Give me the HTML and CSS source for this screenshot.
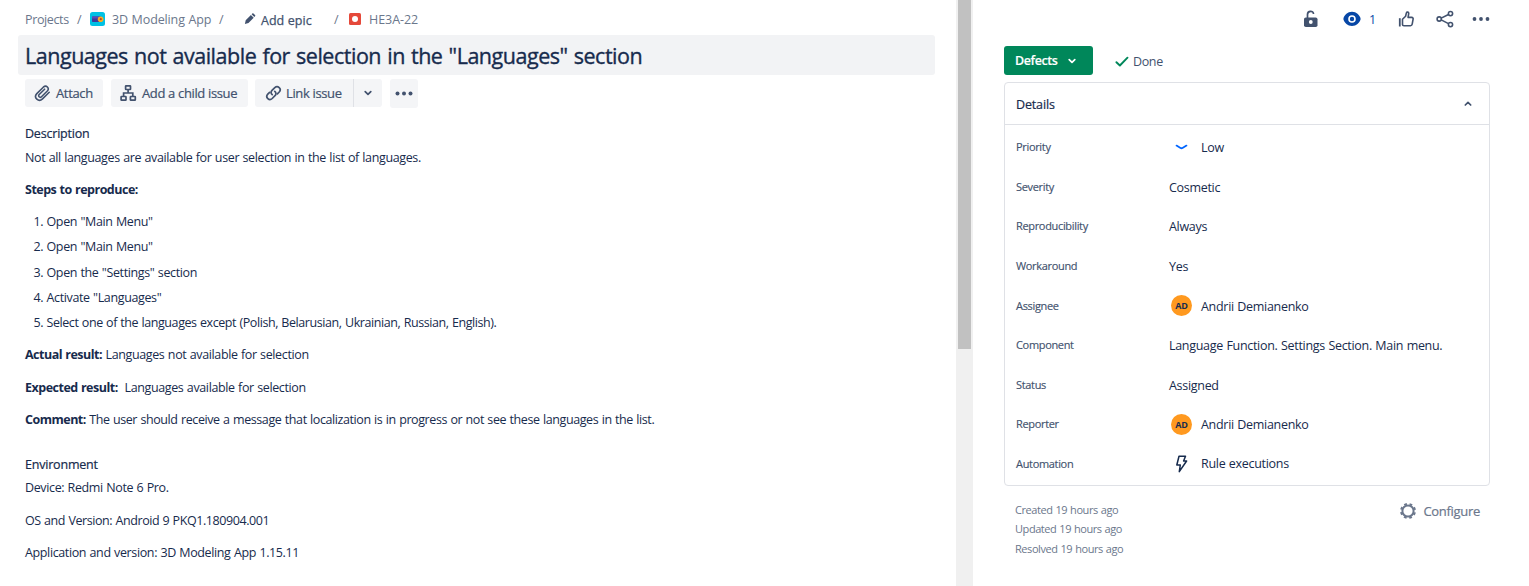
FILE: index.html
```html
<!DOCTYPE html>
<html lang="en">
<head>
<meta charset="utf-8">
<title>HE3A-22</title>
<link rel="stylesheet" href="styles.css">
</head>
<body>
<div class="page">
  <main class="issue">
    <nav class="crumbs">
      <span class="crumb projects">Projects</span><span class="slash">/</span>
      <svg class="app-icon" width="15" height="14" viewBox="0 0 15 14"><rect width="15" height="14" rx="2.5" fill="#00c1e4"/><rect x="2" y="4.5" width="9" height="5.5" rx=".8" fill="#3d3a9c"/><rect x="2" y="4.5" width="9" height="2" fill="#5b4bb5"/><circle cx="10.6" cy="7.2" r="2.8" fill="#ffab1f"/><circle cx="10.8" cy="7.2" r="1.1" fill="#b04a2e"/></svg>
      <span class="crumb app">3D Modeling App</span><span class="slash">/</span>
      <svg class="pencil" width="12" height="12" viewBox="0 0 12 12" fill="#42526e"><path d="M1.7 7.2 6.9 2l2.8 2.8-5.2 5.2L.9 11.1zM7.6 1.3l.7-.7q.6-.5 1.2 0l1.500 1.500q.6.6 0 1.200l-.7.8z"/></svg>
      <span class="epic">Add epic</span><span class="slash">/</span>
      <svg class="bug" width="12" height="12" viewBox="0 0 12 12"><rect width="12" height="12" rx="1.500" fill="#e5493a"/><circle cx="6" cy="6" r="3" fill="#fff"/></svg>
      <span class="crumb key">HE3A-22</span>
    </nav>
    <h1 class="title">Languages not available for selection in the "Languages" section</h1>
    <div class="actions">
      <button class="btn attach"><svg width="17" height="18" viewBox="0 0 17 18" fill="none" stroke="#42526e" stroke-width="1.600" stroke-linecap="round" stroke-linejoin="round"><path d="M15.200 8.300 8.500 14.900c-3.900 3.700-9.300-1.400-5.700-5.300L9.300 3.200c3-2.800 6.600 1 4 3.800L7.500 12.700c-1.700 1.600-3.900-.6-2.300-2.200L10.600 5.200"/></svg><span>Attach</span></button>
      <button class="btn child"><svg width="17" height="18" viewBox="0 0 17 18" fill="none" stroke="#42526e" stroke-width="1.700"><rect x="5.600" y="1.800" width="4.900" height="3.700" rx=".5"/><rect x="1.100" y="12.500" width="4.900" height="3.700" rx=".5"/><rect x="10.400" y="12.500" width="4.900" height="3.700" rx=".5"/><path d="M8.100 5.500V9M3.600 12.500V9h9.200v3.500"/></svg><span>Add a child issue</span></button>
      <div class="split">
        <button class="btn link"><svg width="17" height="18" viewBox="0 0 17 18" fill="none" stroke="#42526e" stroke-width="1.700" stroke-linecap="round"><path d="M7.200 10.700C5.600 9.300 5.800 7.600 7 6.400l2.800-2.800c2.900-2.700 7.300 1.200 4.400 4.400l-1.800 1.800"/><path d="M9.800 7.400c1.600 1.400 1.400 3.100.2 4.300l-2.800 2.800c-2.900 2.700-7.300-1.200-4.400-4.400l1.800-1.800"/></svg><span>Link issue</span></button>
        <button class="btn drop"><svg width="10" height="8" viewBox="0 0 10 8" fill="none" stroke="#42526e" stroke-width="1.700" stroke-linecap="round" stroke-linejoin="round"><path d="m2.200 2.600 2.800 2.800 2.800-2.800"/></svg></button>
      </div>
      <button class="btn more"><svg width="18" height="6" viewBox="0 0 18 6" fill="#42526e"><circle cx="2.500" cy="2.500" r="2"/><circle cx="9" cy="2.500" r="2"/><circle cx="15.500" cy="2.500" r="2"/></svg></button>
    </div>
    <section class="body">
      <h2 class="label">Description</h2>
      <p>Not all languages are available for user selection in the list of languages.</p>
      <p class="p-steps"><b>Steps to reproduce:</b></p>
      <ol class="steps">
        <li>Open "Main Menu"</li>
        <li>Open "Main Menu"</li>
        <li>Open the "Settings" section</li>
        <li>Activate "Languages"</li>
        <li class="long">Select one of the languages except (Polish, Belarusian, Ukrainian, Russian, English).</li>
      </ol>
      <p><b>Actual result:</b> Languages not available for selection</p>
      <p><b>Expected result:</b>&nbsp; Languages available for selection</p>
      <p class="comment"><b>Comment:</b> The user should receive a message that localization is in progress or not see these languages in the list.</p>
    </section>
    <section class="body env">
      <h2 class="label">Environment</h2>
      <p>Device: Redmi Note 6 Pro.</p>
      <p class="os">OS and Version: Android 9 PKQ1.180904.001</p>
      <p>Application and version: 3D Modeling App 1.15.11</p>
    </section>
  </main>
  <div class="scrollbar"><div class="thumb"></div></div>
  <aside class="side">
    <div class="tools">
      <svg class="lock" width="16" height="20" viewBox="0 0 16 20"><path d="M4.500 9V5.500c0-4.200 6-4.200 6-.5" fill="none" stroke="#42526e" stroke-width="1.700"/><rect x="1" y="8.500" width="13.500" height="9.500" rx="1.800" fill="#42526e"/><circle cx="7.800" cy="13" r="1.900" fill="#fff"/></svg>
      <svg class="eye" width="18" height="16" viewBox="0 0 18 16"><path d="M9 .8c4.500 0 7.400 3.500 8.400 6q.4 1.200 0 2.300c-1 2.600-3.900 6-8.400 6s-7.400-3.400-8.400-6q-.4-1.100 0-2.300c1-2.500 3.900-6 8.400-6z" fill="#0747a6"/><circle cx="9" cy="8" r="3" fill="none" stroke="#fff" stroke-width="1.600"/></svg>
      <span class="count">1</span>
      <svg class="thumb-up" width="17" height="17" viewBox="0 0 17 17" fill="none" stroke="#42526e" stroke-width="1.600" stroke-linejoin="round"><path d="M1.800 7.200v8.300" stroke-width="1.800"/><path d="M4.500 13.800V8.300l3.100-3.100.8-3.300c.5-1.500 2.500-.8 2.300.7l-.6 3.800h3.600c1.100 0 1.600.8 1.400 1.800l-.9 5c-.2 1-.8 1.500-1.700 1.500H6c-1 0-1.500-.3-1.500-.9z"/></svg>
      <svg class="share" width="18" height="18" viewBox="0 0 18 18" fill="none" stroke="#42526e" stroke-width="1.600"><circle cx="3.200" cy="9" r="2.100"/><circle cx="14.500" cy="3.600" r="2.100"/><circle cx="14.500" cy="14.600" r="2.100"/><path d="m5.200 8.100 7.300-3.600M5.200 9.900l7.300 3.700"/></svg>
      <svg class="dots" width="18" height="6" viewBox="0 0 18 6" fill="#42526e"><circle cx="2.500" cy="3" r="1.900"/><circle cx="9" cy="3" r="1.900"/><circle cx="15.500" cy="3" r="1.900"/></svg>
    </div>
    <div class="state">
      <button class="status"><span>Defects</span><svg width="10" height="8" viewBox="0 0 10 8" fill="none" stroke="#fff" stroke-width="1.700" stroke-linecap="round" stroke-linejoin="round"><path d="m2.200 2.600 2.800 2.700 2.800-2.700"/></svg></button>
      <svg class="check" width="14" height="12" viewBox="0 0 14 12" fill="none" stroke="#00875a" stroke-width="1.900" stroke-linecap="round" stroke-linejoin="round"><path d="m1.400 7.200 3.500 3.300 7.600-7.800"/></svg>
      <span class="done">Done</span>
    </div>
    <section class="card">
      <header class="card-head"><span>Details</span><svg width="10" height="8" viewBox="0 0 10 8" fill="none" stroke="#42526e" stroke-width="1.700" stroke-linecap="round" stroke-linejoin="round"><path d="m2.300 5 2.700-2.700L7.700 5"/></svg></header>
      <dl class="fields">
        <div class="row"><dt>Priority</dt><dd><span class="icon"><svg width="13" height="6" viewBox="0 0 13 6" fill="none" stroke="#0065ff" stroke-width="1.800" stroke-linecap="round"><path d="M1.500 1.600 5.500 4q1 .5 2 0l4-2.400"/></svg></span><span>Low</span></dd></div>
        <div class="row"><dt>Severity</dt><dd><span>Cosmetic</span></dd></div>
        <div class="row"><dt>Reproducibility</dt><dd><span>Always</span></dd></div>
        <div class="row"><dt>Workaround</dt><dd><span>Yes</span></dd></div>
        <div class="row"><dt>Assignee</dt><dd><span class="icon"><i class="avatar">AD</i></span><span>Andrii Demianenko</span></dd></div>
        <div class="row"><dt>Component</dt><dd><span>Language Function. Settings Section. Main menu.</span></dd></div>
        <div class="row"><dt>Status</dt><dd><span>Assigned</span></dd></div>
        <div class="row"><dt>Reporter</dt><dd><span class="icon"><i class="avatar">AD</i></span><span>Andrii Demianenko</span></dd></div>
        <div class="row automation"><dt>Automation</dt><dd><span class="icon"><svg width="13" height="18" viewBox="0 0 13 18" fill="none" stroke="#172b4d" stroke-width="1.500" stroke-linejoin="round"><path d="M4 1.200h6.500L8.600 6h3L4.300 16.600 5.300 10H1.800z"/></svg></span><span>Rule executions</span></dd></div>
      </dl>
    </section>
    <footer class="foot">
      <div class="dates"><span>Created 19 hours ago</span><span>Updated 19 hours ago</span><span>Resolved 19 hours ago</span></div>
      <div class="configure"><svg width="18" height="18" viewBox="0 0 18 18" fill="none" stroke="#6b778c"><circle cx="9" cy="9" r="5.600" stroke-width="2"/><circle cx="9" cy="9" r="7.100" stroke-width="1.800" stroke-dasharray="2.800 2.776" stroke-dashoffset="-1.400"/></svg><span>Configure</span></div>
    </footer>
  </aside>
</div>
</body>
</html>
```
FILE: styles.css
```css
* { box-sizing: border-box; }
body, h1, h2, p, ol, dl, dd { margin: 0; padding: 0; }
body { font: 12.5px/20px "Open Sans", "Noto Sans", sans-serif; letter-spacing: -.37px; word-spacing: .5px; color: #172b4d; background: #fff; overflow: hidden; }
svg { display: block; flex: none; }
.page { display: flex; height: 586px; }

.issue { width: 956px; padding: 9px 21px 0 18px; }
.crumbs { display: flex; align-items: center; height: 20px; padding-left: 7px; color: #6b778c; line-height: 20px; white-space: nowrap; }
.crumbs span { padding-top: 2px; }
.projects { width: 44px; }
.slash { width: 6px; margin-left: 8px; }
.app-icon { margin-left: 7px; }
.app { width: 100px; margin-left: 7px; letter-spacing: -.12px; }
.app + .slash { margin-left: 7px; }
.pencil { margin-left: 19px; }
.epic { width: 52px; margin: 1px 0 0 5px; color: #42526e; font-weight: 500; letter-spacing: -.02px; -webkit-text-stroke: .25px; }
.epic + .slash { margin-left: 21px; }
.bug { margin-left: 9px; }
.key { margin-left: 8px; letter-spacing: -.05px; }

.title { height: 40px; margin-top: 6px; padding: 0 7px; border-radius: 3px; background: #f2f3f5; font-size: 21.5px; line-height: 42px; font-weight: 500; letter-spacing: -.475px; word-spacing: 1px; white-space: nowrap; -webkit-text-stroke: .35px; }

.actions { display: flex; gap: 8px; height: 29px; margin: 4px 0 0 7px; }
.btn { display: flex; align-items: center; height: 28px; padding: 0; border: 0; border-radius: 3px; background: #f4f5f7; color: #42526e; font: inherit; font-size: 13px; font-weight: 500; letter-spacing: -.35px; white-space: nowrap; }
.btn span { -webkit-text-stroke: .2px; }
.attach { width: 78px; padding-left: 9px; gap: 5px; }
.child { width: 137px; padding-left: 9px; gap: 5px; }
.split { display: flex; margin-left: -1px; gap: 1px; }
.link { width: 98px; padding-left: 10px; gap: 4px; border-radius: 3px 0 0 3px; }
.drop { width: 28px; justify-content: center; border-radius: 0 3px 3px 0; box-shadow: -1px 0 #dfe1e6; }
.more { width: 28px; height: 29px; justify-content: center; }

.body { padding-left: 7px; margin-top: 16px; white-space: nowrap; letter-spacing: -.37px; }
.label { font-size: 12.5px; font-weight: 500; line-height: 20px; letter-spacing: -.2px; -webkit-text-stroke: .2px; }
.body p { margin-top: 12.4px; }
.body .label + p { margin-top: 4px; }
.body .p-steps { margin-top: 12px; }
.body b { font-weight: 700; letter-spacing: -.5px; }
.steps { margin-top: 12.05px; padding-left: 21.5px; }
.steps li + li { margin-top: 5.25px; }
.long { letter-spacing: -.42px; }
.body .steps + p { margin-top: 12.15px; }
.comment { letter-spacing: -.4px; }
.env { margin-top: 25px; }
.body.env .label + p { margin-top: 3px; }
.body .os { margin-top: 12.7px; letter-spacing: -.42px; }

.scrollbar { width: 17px; padding: 0 2px; background: #f0f0f0; }
.thumb { height: 349px; background: #c1c1c1; }

.side { width: 556px; padding: 7px 39px 0 31px; }
.tools { display: flex; align-items: center; height: 24px; padding-left: 299px; }
.eye { margin-left: 24px; }
.count { width: 7px; margin-left: 8px; padding-top: 1px; color: #0747a6; }
.thumb-up { margin-left: 22px; }
.share { margin-left: 21px; }
.dots { margin-left: 18px; }
.state { display: flex; align-items: center; height: 29px; margin-top: 15px; }
.status { display: flex; align-items: center; gap: 9px; width: 89px; height: 29px; padding: 0 0 0 11px; border: 0; border-radius: 3px; background: #00875a; color: #fff; font: inherit; font-weight: 600; letter-spacing: -.4px; }
.status span { -webkit-text-stroke: .15px; }
.check { margin-left: 22px; }
.done { margin-left: 4px; padding-top: 2px; color: #42526e; }
.card { height: 404px; margin-top: 7px; border: 1px solid #dfe1e6; border-radius: 4px; }
.card-head { display: flex; align-items: center; justify-content: space-between; height: 42px; padding: 1px 16.5px 0 11px; border-bottom: 1px solid #dfe1e6; font-weight: 500; letter-spacing: -.15px; }
.card-head span { padding-top: 2px; -webkit-text-stroke: .2px; }
.fields { padding-top: 2.5px; }
.row { display: flex; align-items: center; height: 39.6px; padding-left: 11px; }
dt { width: 153px; font-size: 11px; font-weight: 500; letter-spacing: -.33px; color: #42526e; -webkit-text-stroke: .15px; }
dd { display: flex; align-items: center; height: 22px; letter-spacing: -.3px; white-space: nowrap; }
dd > span:last-child { padding-top: 2px; }
.automation dd > span:last-child { padding-top: 0; }
.icon { display: flex; align-items: center; justify-content: center; width: 25px; margin-right: 7px; }
.avatar { width: 21px; height: 21px; border-radius: 50%; background: #ff991f; font-size: 9px; line-height: 21px; font-style: normal; font-weight: 700; letter-spacing: -.2px; text-align: center; }
.foot { display: flex; justify-content: space-between; padding: 15px 10px 0 11px; color: #6b778c; }
.dates { display: flex; flex-direction: column; margin-top: -1.2px; font-size: 11px; line-height: 19.5px; letter-spacing: -.43px; }
.configure { display: flex; gap: 6px; align-items: center; height: 20px; font-size: 13px; font-weight: 500; letter-spacing: -.3px; }
.configure span { -webkit-text-stroke: .2px; }
```
